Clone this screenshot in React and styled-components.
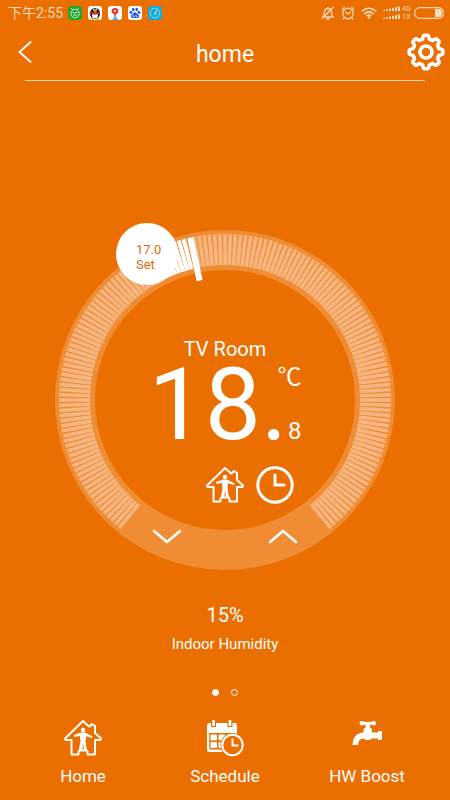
import React from 'react';
import styled, { createGlobalStyle } from 'styled-components';

const GlobalStyle = createGlobalStyle`
  * { box-sizing: border-box; }
  body { margin: 0; background: #eb6e00; }
`;

const Screen = styled.div`
  min-height: 100vh;
  display: flex;
  flex-direction: column;
  background: #eb6e00;
  color: #fff;
  font-family: Roboto, "Noto Sans CJK SC", sans-serif;
`;

const StatusBar = styled.div`
  display: flex;
  align-items: center;
  justify-content: space-between;
  height: 26px;
  padding: 0 6px 0 8px;
  color: #fbdcc0;
`;

const StatusGroup = styled.div`
  display: flex;
  align-items: center;
  gap: ${({ $gap }) => $gap}px;
`;

const Clock = styled.span`
  font-size: 14px;
  line-height: 16px;
`;

const Network = styled.span`
  display: flex;
  flex-direction: column;
  font-size: 7px;
  line-height: 8px;
  width: 10px;
`;

const Header = styled.header`
  display: grid;
  grid-template-columns: 46px 1fr 46px;
  align-items: center;
  height: 54px;
  padding: 0 2px 2px;
`;

const Title = styled.h1`
  margin: 0;
  padding-top: 5px;
  font-size: 23px;
  line-height: 28px;
  font-weight: 400;
  text-align: center;
`;

const IconButton = styled.button`
  display: flex;
  align-items: center;
  justify-content: center;
  height: 44px;
  padding: 0;
  border: 0;
  background: none;
  color: inherit;
  cursor: pointer;
`;

const SettingsButton = styled(IconButton)`
  justify-content: flex-end;
  padding-right: 3px;
`;

const Divider = styled.hr`
  width: calc(100% - 50px);
  margin: 0 auto;
  border: 0;
  border-top: 1px solid #f9d5b8;
`;

const Main = styled.main`
  flex: 1;
  display: flex;
  flex-direction: column;
  align-items: center;
  padding-top: 149px;
`;

const Dial = styled.section`
  position: relative;
  width: 340px;
  height: 340px;
  display: flex;
  flex-direction: column;
  align-items: center;
`;

const DialArt = styled.svg`
  position: absolute;
  inset: 0;
  overflow: visible;
`;

const SetPoint = styled.div`
  position: absolute;
  left: 61px;
  top: -7px;
  width: 62px;
  height: 62px;
  padding: 19px 0 0 20px;
  border-radius: 50%;
  background: #fff;
  color: #dc6a0c;
  font-size: 13px;
  line-height: 15px;
`;

const Reading = styled.div`
  position: relative;
  display: flex;
  flex-direction: column;
  align-items: center;
  padding-top: 107px;
`;

const Room = styled.h2`
  margin: 0;
  font-size: 20px;
  line-height: 24px;
  font-weight: 400;
`;

const Temperature = styled.div`
  display: flex;
  height: 86px;
  margin-top: 1px;
`;

const Degrees = styled.span`
  font-size: 100px;
  line-height: 86px;
`;

const Units = styled.span`
  display: flex;
  flex-direction: column;
  justify-content: space-between;
  align-items: flex-end;
  width: 14px;
  padding-bottom: 2px;
  font-size: 24px;
  line-height: 30px;
`;

const Unit = styled.span`
  display: flex;
`;

const Modes = styled.div`
  display: flex;
  align-items: center;
  gap: 12px;
  margin: 18px 0 0 50px;
`;

const Steppers = styled.div`
  position: relative;
  display: flex;
  gap: 72px;
  margin-top: 17px;
`;

const Humidity = styled.section`
  display: flex;
  flex-direction: column;
  align-items: center;
  gap: 8px;
  padding-top: 33px;
`;

const Percent = styled.span`
  font-size: 20px;
  line-height: 24px;
`;

const Caption = styled.span`
  font-size: 15px;
  line-height: 18px;
`;

const Pager = styled.div`
  display: flex;
  gap: 12px;
  padding-top: 36px;
`;

const Dot = styled.button`
  width: 7px;
  height: 7px;
  padding: 0;
  border: 1px solid #fff;
  border-radius: 50%;
  background: ${({ $active }) => ($active ? '#fff' : 'transparent')};
`;

const TabBar = styled.nav`
  display: grid;
  grid-template-columns: repeat(3, 1fr);
  padding: 0 12px 13px;
`;

const Tab = styled.a`
  display: flex;
  flex-direction: column;
  align-items: center;
  gap: 8px;
  color: inherit;
  text-decoration: none;
  font-size: 17px;
  line-height: 22px;
`;

const TabIcon = styled.span`
  display: flex;
  align-items: center;
  height: 38px;
`;

const TICK_STEP = 1.8;

const polar = (angle, radius) => {
  const a = (angle * Math.PI) / 180;
  return [170 + radius * Math.sin(a), 170 - radius * Math.cos(a)];
};

const radial = (angle, from, to) => {
  const [x1, y1] = polar(angle, from);
  const [x2, y2] = polar(angle, to);
  return `M${x1} ${y1}L${x2} ${y2}`;
};

const tickPath = (first, last) => {
  let d = '';
  for (let i = first; i <= last; i += 1) d += radial(i * TICK_STEP, 135, 166);
  return d;
};

function HouseIcon() {
  return (
    <svg width="38" height="36" viewBox="0 0 38 36" fill="none" stroke="#fff" strokeWidth="2" strokeLinejoin="round">
      <path d="M19 1 L1 18.5 L1.5 20 H7.5 V34.5 H14.5 V31.5 L16 30.5 H22 L23.5 31.5 V34.5 H31 V20 H36.5 L37 18.5 L31 13 V6 L28 4 L25.5 6.5 L24.5 6 Z" />
      <circle cx="19" cy="10" r="2.2" fill="#fff" stroke="none" />
      <path d="M10 15 L17 12.5 H21 L28.5 16.5 L28 18 L22.2 16.2 L21.5 21 L22.5 28 L23.5 30 H20 L19.2 23 L18.4 30 H14.8 L16.5 21 L15.8 16 L10.5 17 Z" fill="#fff" stroke="none" />
    </svg>
  );
}

function ClockIcon() {
  return (
    <svg width="38" height="38" viewBox="0 0 38 38" fill="none" stroke="#fff" strokeWidth="3">
      <circle cx="19" cy="19" r="17.2" />
      <path d="M19 9 V19 H28" strokeLinecap="round" />
    </svg>
  );
}

function ScheduleIcon() {
  return (
    <svg width="38" height="38" viewBox="0 0 38 38">
      <rect x="1" y="4" width="30" height="29" rx="2.5" fill="#fff" />
      <path d="M3.2 14 H29 V30.500 H5 Q3.2 30.500 3.2 29Z" fill="#eb6e00" />
      <path d="M7.500 1 V8 M24 1 V8" stroke="#eb6e00" strokeWidth="5" />
      <path d="M7.500 1 V7 M24 1 V7" stroke="#fff" strokeWidth="2.6" />
      <g fill="#fff">
        <rect x="4.500" y="15.500" width="6.500" height="6" rx="1" />
        <rect x="12.500" y="15.500" width="6.500" height="6" rx="1" />
        <rect x="20.500" y="15.500" width="6.500" height="6" rx="1" />
        <rect x="4.500" y="23" width="6.500" height="6" rx="1" />
        <rect x="12.500" y="23" width="6.500" height="6" rx="1" />
      </g>
      <circle cx="26.500" cy="26" r="12" fill="#eb6e00" />
      <circle cx="26.500" cy="26" r="10.200" fill="none" stroke="#fff" strokeWidth="2" />
      <path d="M26.500 19.500 V26.500 H32.500" fill="none" stroke="#fff" strokeWidth="2" />
    </svg>
  );
}

function TapIcon() {
  return (
    <svg width="38" height="36" viewBox="-4 0 38 36" fill="#fff">
      <path d="M9.500 1 Q7.500 1 7.500 3.200 Q7.500 5.500 9.500 5.500 L13.500 4.500 V7.500 Q11.500 8 11.500 10.500 V12.500 Q1 13 .5 25 H6 Q6.500 18.500 11.500 18.500 Q15.500 22 20 18.500 H26 V20 H30 V11 H26 V12.500 H20 V10.500 Q20 8 18 7.500 V4.500 L22 5.500 Q24 5.500 24 3.200 Q24 1 22 1 L18 2 H13.500Z" />
    </svg>
  );
}

function GearIcon() {
  const points = [];
  for (let i = 0; i < 96; i += 1) {
    const a = (i / 96) * Math.PI * 2;
    const wave = Math.max(-1, Math.min(1, 1.9 * Math.cos(8 * a)));
    const r = 15 + wave * 1.8;
    points.push(`${19 + r * Math.sin(a)},${19 - r * Math.cos(a)}`);
  }
  return (
    <svg width="38" height="38" viewBox="0 0 38 38" fill="none" stroke="#fff" strokeWidth="3.6" strokeLinejoin="round">
      <polygon points={points.join(' ')} />
      <circle cx="19" cy="19" r="6" />
    </svg>
  );
}

function AppBadges() {
  return (
    <svg width="94" height="14" viewBox="0 0 94 14">
      <rect width="14" height="14" rx="3" fill="#22a52d" />
      <circle cx="7" cy="7.500" r="4.200" fill="none" stroke="#c9efc4" />
      <path d="M3 2 L5 4 M11 2 L9 4 M4.500 6.500 H9.500 M5 9 H9" stroke="#c9efc4" />
      <rect x="20" width="14" height="14" rx="3" fill="#fff" />
      <ellipse cx="27" cy="7.500" rx="5" ry="5.500" fill="#181818" />
      <ellipse cx="27" cy="9.500" rx="3" ry="3" fill="#fff" />
      <path d="M22.500 6.500 Q27 9 31.500 6.500" stroke="#e9231d" strokeWidth="1.800" fill="none" />
      <path d="M23 13 H26 M28 13 H31 M25.500 5 H28.500" stroke="#f5b51b" strokeWidth="1.400" />
      <circle cx="25.800" cy="3.500" r=".8" fill="#fff" />
      <circle cx="28.200" cy="3.500" r=".8" fill="#fff" />
      <rect x="40" width="14" height="14" rx="3" fill="#fff" />
      <path d="M44 14 L47 10 L51 14Z" fill="#57b5e8" />
      <path d="M47 12 L46 8 Q43.500 7.500 43.500 5 Q44 2 47 2 Q50.500 2 50.500 5 Q50.500 7.500 48 8Z" fill="#e3302d" />
      <circle cx="47" cy="5" r="1.300" fill="#fbc5bf" />
      <rect x="60" width="14" height="14" rx="3" fill="#fff" />
      <g fill="#2856d8">
        <ellipse cx="65.300" cy="3.600" rx="1.300" ry="1.800" />
        <ellipse cx="68.700" cy="3.600" rx="1.300" ry="1.800" />
        <circle cx="63" cy="6.500" r="1.400" />
        <circle cx="71" cy="6.500" r="1.400" />
        <path d="M67 6 Q69 7 71 9.500 Q71.500 12 69 12 H65 Q62.500 12 63 9.500 Q65 7 67 6Z" />
      </g>
      <path d="M65 9 V10.500 H66.500 M68 9 V10.500 H69.500" stroke="#fff" fill="none" strokeWidth=".8" />
      <rect x="80" width="14" height="14" rx="3" fill="#18a9d6" />
      <circle cx="87" cy="7" r="4.800" fill="none" stroke="#a9e5ef" strokeWidth=".8" />
      <path d="M87 8 L89 3.500 M87 7 V9" stroke="#d6f4f7" />
    </svg>
  );
}

function BellOffIcon() {
  return (
    <svg width="14" height="14" viewBox="0 0 14 14" fill="none" stroke="#fbdcc0" strokeWidth="1.300">
      <path d="M2 11 Q3.500 9.500 3.500 6 Q3.500 2.500 7 2.500 Q10.500 2.500 10.500 6 Q10.500 9.500 12 11Z M7 2.500 V1 M5.500 13 H8.500 M12.500 1 L1 12.500" />
    </svg>
  );
}

function AlarmIcon() {
  return (
    <svg width="14" height="14" viewBox="0 0 14 14" fill="none" stroke="#fbdcc0" strokeWidth="1.300">
      <circle cx="7" cy="7.500" r="5.300" />
      <path d="M4.500 6 L7 8 L9.500 6 M1 3.500 L3.500 1 M13 3.500 L10.500 1 M3 12 L2 13 M11 12 L12 13" />
    </svg>
  );
}

function WifiIcon() {
  return (
    <svg width="16" height="12" viewBox="0 0 16 12" fill="none" stroke="#fbdcc0" strokeWidth="1.600">
      <path d="M.8 4.500 Q8 -2 15.200 4.500 M3.200 7 Q8 2.700 12.800 7 M5.500 9 Q8 7 10.500 9" />
      <circle cx="8" cy="10.500" r="1.200" fill="#fbdcc0" stroke="none" />
    </svg>
  );
}

function SignalIcon() {
  const bars = [0, 1, 2, 3, 4, 5];
  return (
    <svg width="17" height="14" viewBox="0 0 17 14" fill="#fbdcc0">
      {bars.map((i) => (
        <g key={i}>
          <rect x={i * 3} y={4 - i * 0.7} width="2" height={1 + i * 0.7} />
          <rect x={i * 3} y={12 - i * 0.7} width="2" height={1 + i * 0.7} />
        </g>
      ))}
    </svg>
  );
}

function BatteryIcon() {
  return (
    <svg width="30" height="12" viewBox="0 0 30 12">
      <rect x=".6" y=".6" width="28.800" height="10.800" rx="5" fill="none" stroke="#fbdcc0" strokeWidth="1.200" />
      <path d="M21 2 H25 Q28 2 28 6 Q28 10 25 10 H21Z" fill="#fbdcc0" />
    </svg>
  );
}

function Chevron({ d }) {
  return (
    <svg width="30" height="16" viewBox="0 0 30 16" fill="none" stroke="#fff" strokeWidth="2.600" strokeLinecap="round" strokeLinejoin="round">
      <path d={d} />
    </svg>
  );
}

const Stepper = styled(IconButton)`
  width: 44px;
  height: 32px;
`;

const tabs = [
  { label: 'Home', Icon: HouseIcon },
  { label: 'Schedule', Icon: ScheduleIcon },
  { label: 'HW Boost', Icon: TapIcon },
];

export default function App() {
  return (
    <Screen>
      <GlobalStyle />
      <StatusBar>
        <StatusGroup $gap={5}>
          <Clock>下午2:55</Clock>
          <AppBadges />
        </StatusGroup>
        <StatusGroup $gap={6}>
          <BellOffIcon />
          <AlarmIcon />
          <WifiIcon />
          <StatusGroup $gap={2}>
            <SignalIcon />
            <Network>
              <span>4G</span>
              <span>1X</span>
            </Network>
            <BatteryIcon />
          </StatusGroup>
        </StatusGroup>
      </StatusBar>
      <Header>
        <IconButton aria-label="Back">
          <svg width="14" height="24" viewBox="0 0 14 24" fill="none" stroke="#fff" strokeWidth="1.800">
            <path d="M13.200 1.500 L1.500 12 L13.200 22.500" />
          </svg>
        </IconButton>
        <Title>home</Title>
        <SettingsButton aria-label="Settings">
          <GearIcon />
        </SettingsButton>
      </Header>
      <Divider />
      <Main>
        <Dial aria-label="Thermostat">
          <DialArt viewBox="0 0 340 340" fill="none">
            <circle cx="170" cy="170" r="150" stroke="#f08c33" strokeWidth="40" />
            <path d={tickPath(-78, 78)} stroke="#f5b682" strokeWidth="3.600" />
            <path d={tickPath(-17, -8)} stroke="#fff" strokeWidth="4" />
            <path d={radial(-12, 122, 166)} stroke="#fff" strokeWidth="6" />
          </DialArt>
          <SetPoint>
            <div>17.0</div>
            <div>Set</div>
          </SetPoint>
          <Reading>
            <Room>TV Room</Room>
            <Temperature>
              <Degrees>18.</Degrees>
              <Units>
                <Unit>℃</Unit>
                <span>8</span>
              </Units>
            </Temperature>
            <Modes>
              <HouseIcon />
              <ClockIcon />
            </Modes>
          </Reading>
          <Steppers>
            <Stepper aria-label="Lower temperature">
              <Chevron d="M2 2 L15 13 L28 2" />
            </Stepper>
            <Stepper aria-label="Raise temperature">
              <Chevron d="M2 13 L15 2 L28 13" />
            </Stepper>
          </Steppers>
        </Dial>
        <Humidity>
          <Percent>15%</Percent>
          <Caption>Indoor Humidity</Caption>
        </Humidity>
        <Pager>
          <Dot $active aria-label="Page 1" />
          <Dot aria-label="Page 2" />
        </Pager>
      </Main>
      <TabBar>
        {tabs.map(({ label, Icon }) => (
          <Tab key={label} href={`#${label.toLowerCase().replace(' ', '-')}`}>
            <TabIcon>
              <Icon />
            </TabIcon>
            {label}
          </Tab>
        ))}
      </TabBar>
    </Screen>
  );
}
